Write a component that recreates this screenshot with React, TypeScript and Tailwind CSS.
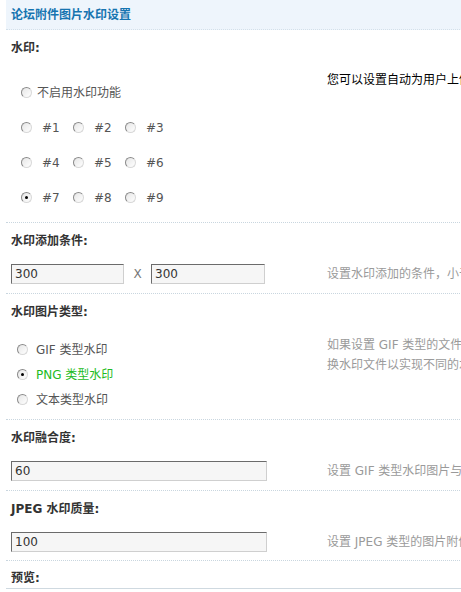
import React from 'react';

const font = { fontFamily: '"DejaVu Sans", "Noto Sans CJK SC", sans-serif' };

function Radio({ checked }: { checked?: boolean }) {
  return (
    <span className="relative inline-block h-[11px] w-[11px] shrink-0 rounded-full border border-t-[#8a8a8a] border-l-[#8a8a8a] border-r-[#d8d8d8] border-b-[#d8d8d8] bg-gradient-to-br from-[#e6e6e6] to-white">
      {checked && <span className="absolute left-[3px] top-[3px] h-[3px] w-[3px] rounded-full bg-black" />}
    </span>
  );
}

function Title({ text }: { text: string }) {
  return (
    <div className="flex h-[36px] items-center pl-[5px] text-[12px] font-bold text-[#333]">{text}</div>
  );
}

function Sep() {
  return <div className="border-b border-dotted border-[#c9d6df]" />;
}

function Input({ value, w }: { value: string; w: string }) {
  return (
    <div
      className={`flex h-[20px] items-center border border-t-[#6b6b6b] border-l-[#6b6b6b] border-r-[#cfcfcf] border-b-[#cfcfcf] bg-[#f6f6f6] pl-[3px] text-[12px] text-[#333] ${w}`}
    >
      {value}
    </div>
  );
}

function Desc({ children, color = 'text-[#9a9a9a]' }: { children: React.ReactNode; color?: string }) {
  return <div className={`whitespace-nowrap text-[12px] leading-[20px] ${color}`}>{children}</div>;
}

export default function App() {
  const grid = [
    ['#1', '#2', '#3'],
    ['#4', '#5', '#6'],
    ['#7', '#8', '#9'],
  ];

  return (
    <div className="h-[592px] w-[461px] overflow-hidden bg-white" style={font}>
      <div className="ml-[6px] w-[800px]">
        <div className="flex h-[30px] items-center border-b border-dotted border-[#d3e0ea] bg-[#eef5fc] pl-[5px] text-[12px] font-bold text-[#1674b0]">
          论坛附件图片水印设置
        </div>

        {/* 水印 */}
        <Title text="水印:" />
        <div className="flex">
          <div className="w-[321px] pb-[7px] pl-[15px] pt-[9px]">
            <div className="flex h-[35px] items-center gap-[5px] text-[12px] text-[#555]">
              <Radio />
              <span>不启用水印功能</span>
            </div>
            {grid.map((row, i) => (
              <div key={i} className="flex h-[35px] items-center">
                {row.map((label) => (
                  <div key={label} className="flex w-[52px] items-center gap-[10px] text-[12px] text-[#555]">
                    <Radio checked={label === '#7'} />
                    <span>{label}</span>
                  </div>
                ))}
              </div>
            ))}
          </div>
          <div className="pt-[4px]">
            <Desc color="text-black">您可以设置自动为用户上传的 JPG/PNG/GIF 图片附件添加水印</Desc>
          </div>
        </div>
        <Sep />

        {/* 水印添加条件 */}
        <Title text="水印添加条件:" />
        <div className="flex items-center pb-[9px] pt-[5px]">
          <div className="flex w-[321px] items-center pl-[5px]">
            <Input value="300" w="w-[113px]" />
            <span className="w-[27px] text-center text-[12px] text-[#777]">X</span>
            <Input value="300" w="w-[114px]" />
          </div>
          <Desc>设置水印添加的条件，小于此尺寸的图片附件将不添加水印</Desc>
        </div>
        <Sep />

        {/* 水印图片类型 */}
        <Title text="水印图片类型:" />
        <div className="flex pb-[7px] pt-[7px]">
          <div className="w-[321px] pl-[11px]">
            <div className="flex h-[25px] items-center gap-[8px] text-[12px] text-[#555]">
              <Radio />
              <span>GIF 类型水印</span>
            </div>
            <div className="flex h-[25px] items-center gap-[8px] text-[12px] text-[#22bb22]">
              <Radio checked />
              <span>PNG 类型水印</span>
            </div>
            <div className="flex h-[25px] items-center gap-[8px] text-[12px] text-[#555]">
              <Radio />
              <span>文本类型水印</span>
            </div>
          </div>
          <div className="-mt-[2px]">
            <Desc>如果设置 GIF 类型的文件作为水印，水印图片为 static/image/common/</Desc>
            <Desc>换水印文件以实现不同的水印效果</Desc>
          </div>
        </div>
        <Sep />

        {/* 水印融合度 */}
        <Title text="水印融合度:" />
        <div className="flex items-center pb-[9px] pt-[5px]">
          <div className="w-[321px] pl-[5px]">
            <Input value="60" w="w-[256px]" />
          </div>
          <Desc>设置 GIF 类型水印图片与原始图片的融合度</Desc>
        </div>
        <Sep />

        {/* JPEG 水印质量 */}
        <Title text="JPEG 水印质量:" />
        <div className="flex items-center pb-[8px] pt-[5px]">
          <div className="w-[321px] pl-[5px]">
            <Input value="100" w="w-[256px]" />
          </div>
          <Desc>设置 JPEG 类型的图片附件添加水印后的质量参数</Desc>
        </div>
        <Sep />

        <div className="flex h-[28px] items-center border-b border-[#cfd9e0] pl-[5px] pt-[6px] text-[12px] font-bold text-[#333]">
          预览:
        </div>
      </div>
    </div>
  );
}
